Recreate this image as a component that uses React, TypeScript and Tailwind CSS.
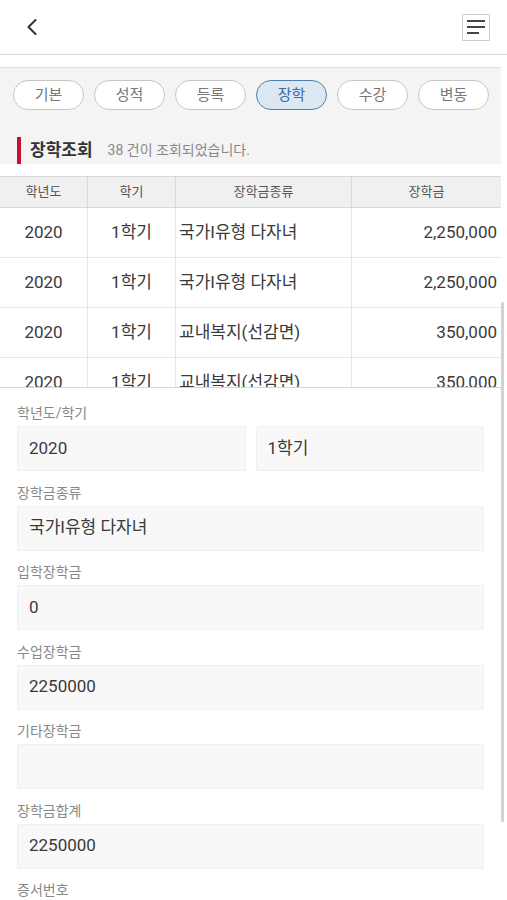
import { ChevronLeft } from "lucide-react";

const tabs = ["기본", "성적", "등록", "장학", "수강", "변동"];

const rows = [
  { year: "2020", term: "1학기", kind: "국가I유형 다자녀", amount: "2,250,000" },
  { year: "2020", term: "1학기", kind: "국가I유형 다자녀", amount: "2,250,000" },
  { year: "2020", term: "1학기", kind: "교내복지(선감면)", amount: "350,000" },
  { year: "2020", term: "1학기", kind: "교내복지(선감면)", amount: "350,000" },
];

const fields = [
  { label: "장학금종류", value: "국가I유형 다자녀" },
  { label: "입학장학금", value: "0" },
  { label: "수업장학금", value: "2250000" },
  { label: "기타장학금", value: "" },
  { label: "장학금합계", value: "2250000" },
];

function Field({ value }: { value: string }) {
  return (
    <div className="h-[45px] flex items-center px-[11px] bg-[#f8f8f8] border border-[#f0f0f0] rounded-[2px] text-[17px] text-[#3a3a3a]">
      {value}
    </div>
  );
}

export default function App() {
  return (
    <div
      className="relative w-[507px] h-[900px] overflow-hidden bg-white"
      style={{ fontFamily: 'Roboto, "Noto Sans CJK KR", sans-serif' }}
    >
      {/* 상단 헤더 */}
      <div className="h-[55px] flex items-center justify-between pl-[18px] pr-[17px] border-b border-[#d6d6d6]">
        <ChevronLeft className="w-[28px] h-[28px] text-[#333]" strokeWidth={1.8} />
        <div className="w-[28px] h-[27px] border border-[#cfcfcf] flex flex-col justify-center gap-[4px] px-[4px]">
          <div className="h-[2px] w-full bg-[#444]" />
          <div className="h-[2px] w-full bg-[#444]" />
          <div className="h-[2px] w-[12px] bg-[#444]" />
        </div>
      </div>

      <div className="w-[501px] mt-[12px]">
        {/* 탭 + 제목 */}
        <div className="bg-[#f4f4f4] border-t border-[#e0e0e0] pt-[12px]">
          <div className="flex gap-[10px] pl-[13px]">
            {tabs.map((t) => (
              <div
                key={t}
                className={
                  t === "장학"
                    ? "w-[71px] h-[30px] rounded-full border border-[#4f7fae] bg-[#dbe7f3] text-[#3d6d9c] text-[15px] flex items-center justify-center"
                    : "w-[71px] h-[30px] rounded-full border border-[#c6c6c6] bg-white text-[#777] text-[15px] flex items-center justify-center"
                }
              >
                {t}
              </div>
            ))}
          </div>
          <div className="flex items-center h-[27px] mt-[27px] mb-[12px] pl-[17px]">
            <div className="w-[4px] h-[27px] bg-[#c8102e]" />
            <span className="ml-[9px] text-[17px] font-semibold text-[#333]">장학조회</span>
            <span className="ml-[15px] text-[14px] text-[#888]">38 건이 조회되었습니다.</span>
          </div>
        </div>

        {/* 목록 테이블 */}
        <div className="h-[212px] overflow-hidden border-b border-[#d4d4d4]">
          <div className="grid grid-cols-[88px_88px_176px_149px] h-[32px] bg-[#f0f0f0] border-y border-[#d8d8d8] text-[13px] text-[#555]">
            <div className="flex items-center justify-center border-r border-[#d8d8d8]">학년도</div>
            <div className="flex items-center justify-center border-r border-[#d8d8d8]">학기</div>
            <div className="flex items-center justify-center border-r border-[#d8d8d8]">장학금종류</div>
            <div className="flex items-center justify-center">장학금</div>
          </div>
          {rows.map((r, i) => (
            <div
              key={i}
              className="grid grid-cols-[88px_88px_176px_149px] h-[50px] border-b border-[#e6e6e6] text-[17px] text-[#3a3a3a]"
            >
              <div className="flex items-center justify-center border-r border-[#e6e6e6]">{r.year}</div>
              <div className="flex items-center justify-center border-r border-[#e6e6e6]">{r.term}</div>
              <div className="flex items-center pl-[3px] border-r border-[#e6e6e6]">{r.kind}</div>
              <div className="flex items-center justify-end pr-[4px]">{r.amount}</div>
            </div>
          ))}
        </div>

        {/* 상세 정보 */}
        <div className="px-[17px] pt-[15px] flex flex-col gap-[11.5px]">
          <div>
            <div className="h-[20px] text-[14px] text-[#888] leading-[20px]">학년도/학기</div>
            <div className="mt-[3px] grid grid-cols-2 gap-[10px]">
              <Field value="2020" />
              <Field value="1학기" />
            </div>
          </div>
          {fields.map((f) => (
            <div key={f.label}>
              <div className="h-[20px] text-[14px] text-[#888] leading-[20px]">{f.label}</div>
              <div className="mt-[3px]">
                <Field value={f.value} />
              </div>
            </div>
          ))}
          <div className="h-[20px] text-[14px] text-[#888] leading-[20px]">증서번호</div>
        </div>
      </div>

      {/* 스크롤바 */}
      <div className="absolute left-[501px] top-[302px] w-[3px] h-[520px] bg-[#d2d2d2] rounded-full" />
    </div>
  );
}
